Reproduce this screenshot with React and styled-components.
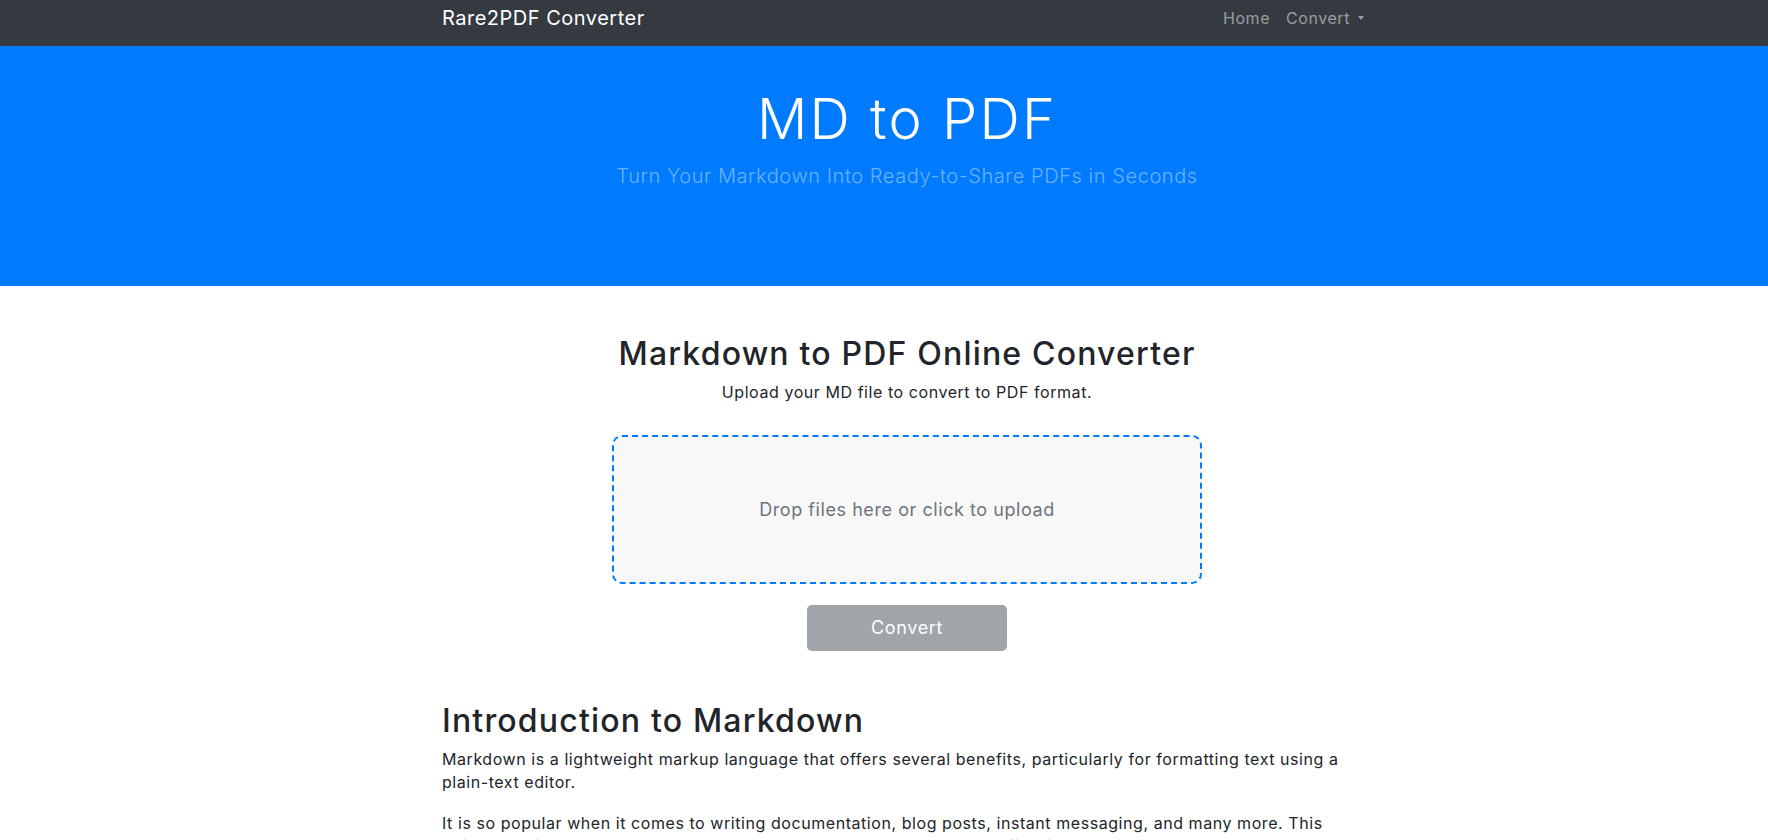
import React from "react"
import styled, { createGlobalStyle } from "styled-components"

const GlobalStyle = createGlobalStyle`
  * {
    box-sizing: border-box;
  }

  body {
    margin: 0;
    font-family: "Inter", "Noto Sans", sans-serif;
    font-size: 16px;
    line-height: 1.5;
    letter-spacing: 0.035em;
    color: #212529;
    background: #fff;
  }
`

export default function App() {
  return <>
    <GlobalStyle />
    <Navbar>
      <Container>
        <NavInner>
          <Brand href="#">Rare2PDF Converter</Brand>
          <NavLinks>
            <NavLink href="#">Home</NavLink>
            <NavLink href="#" dropdown>Convert</NavLink>
          </NavLinks>
        </NavInner>
      </Container>
    </Navbar>

    <Hero>
      <Container>
        <HeroTitle>MD to PDF</HeroTitle>
        <HeroLead>Turn Your Markdown Into Ready-to-Share PDFs in Seconds</HeroLead>
      </Container>
    </Hero>

    <Main>
      <Container>
        <UploadSection>
          <Heading $tight>Markdown to PDF Online Converter</Heading>
          <Lead>Upload your MD file to convert to PDF format.</Lead>
          <DropZone>Drop files here or click to upload</DropZone>
          <ConvertButton disabled>Convert</ConvertButton>
        </UploadSection>

        <Article>
          <Heading>Introduction to Markdown</Heading>
          <Paragraph>
            Markdown is a lightweight markup language that offers several benefits, particularly for formatting text using a plain-text editor.
          </Paragraph>
          <Paragraph>
            It is so popular when it comes to writing documentation, blog posts, instant messaging, and many more. This
            guide explains how Markdown works and how to turn your Markdown files into clean, shareable PDF documents.
          </Paragraph>
        </Article>
      </Container>
    </Main>
  </>
}

const Container = styled.div`
  max-width: 960px;
  padding: 0 15px;
  margin: 0 auto 0 calc(50% - 457px);
`

const Navbar = styled.nav`
  background: #343a40;
  padding: 3px 0 13px;
`

const NavInner = styled.div`
  display: flex;
  align-items: center;
  justify-content: space-between;
`

const Brand = styled.a`
  font-size: 20px;
  line-height: 30px;
  font-weight: 400;
  letter-spacing: 0.025em;
  color: #fff;
  text-decoration: none;
`

const NavLinks = styled.div`
  display: flex;
  align-items: center;
`

const NavLink = styled.a`
  padding: 0 8px;
  font-size: 16px;
  line-height: 30px;
  color: rgba(255, 255, 255, 0.5);
  text-decoration: none;

  &::after {
    content: ${p => p.dropdown ? '""' : "none"};
    display: inline-block;
    margin-left: 8px;
    vertical-align: 4px;
    border-top: 4px solid;
    border-left: 3.5px solid transparent;
    border-right: 3.5px solid transparent;
  }
`

const Hero = styled.header`
  background: #007bff;
  padding: 40px 0 95px;
  text-align: center;
`

const HeroTitle = styled.h1`
  margin: 0 0 8px;
  font-size: 56px;
  font-weight: 300;
  line-height: 1.2;
  letter-spacing: 0.04em;
  color: #fff;
`

const HeroLead = styled.p`
  margin: 0;
  font-size: 20px;
  font-weight: 300;
  line-height: 30px;
  color: rgba(255, 255, 255, 0.42);
`

const Main = styled.main`
  padding-top: 49px;
`

const UploadSection = styled.section`
  display: flex;
  flex-direction: column;
  align-items: center;
  text-align: center;
`

const Heading = styled.h2`
  margin: 0 0 ${p => p.$tight ? "6px" : "8px"};
  font-size: 32px;
  font-weight: 500;
  line-height: 1.2;
  letter-spacing: 0.037em;
  color: #212529;
`

const Lead = styled.p`
  margin: 0 0 16px;
`

const DropZone = styled.div`
  margin-top: 15px;
  width: 590px;
  height: 149px;
  display: flex;
  align-items: center;
  justify-content: center;
  border: 2px dashed #007bff;
  border-radius: 10px;
  background: #f8f8f8;
  color: #6c757d;
  font-size: 18px;
  cursor: pointer;
`

const ConvertButton = styled.button`
  margin-top: 21px;
  width: 200px;
  padding: 9px 0;
  border: 1px solid transparent;
  border-radius: 5px;
  background: #a0a5aa;
  color: #fff;
  font-family: inherit;
  font-size: 18px;
  line-height: 26px;
  letter-spacing: 0.035em;
`

const Article = styled.article`
  padding-top: 51px;
`

const Paragraph = styled.p`
  margin: 0 0 18px;
  line-height: 23px;
`
